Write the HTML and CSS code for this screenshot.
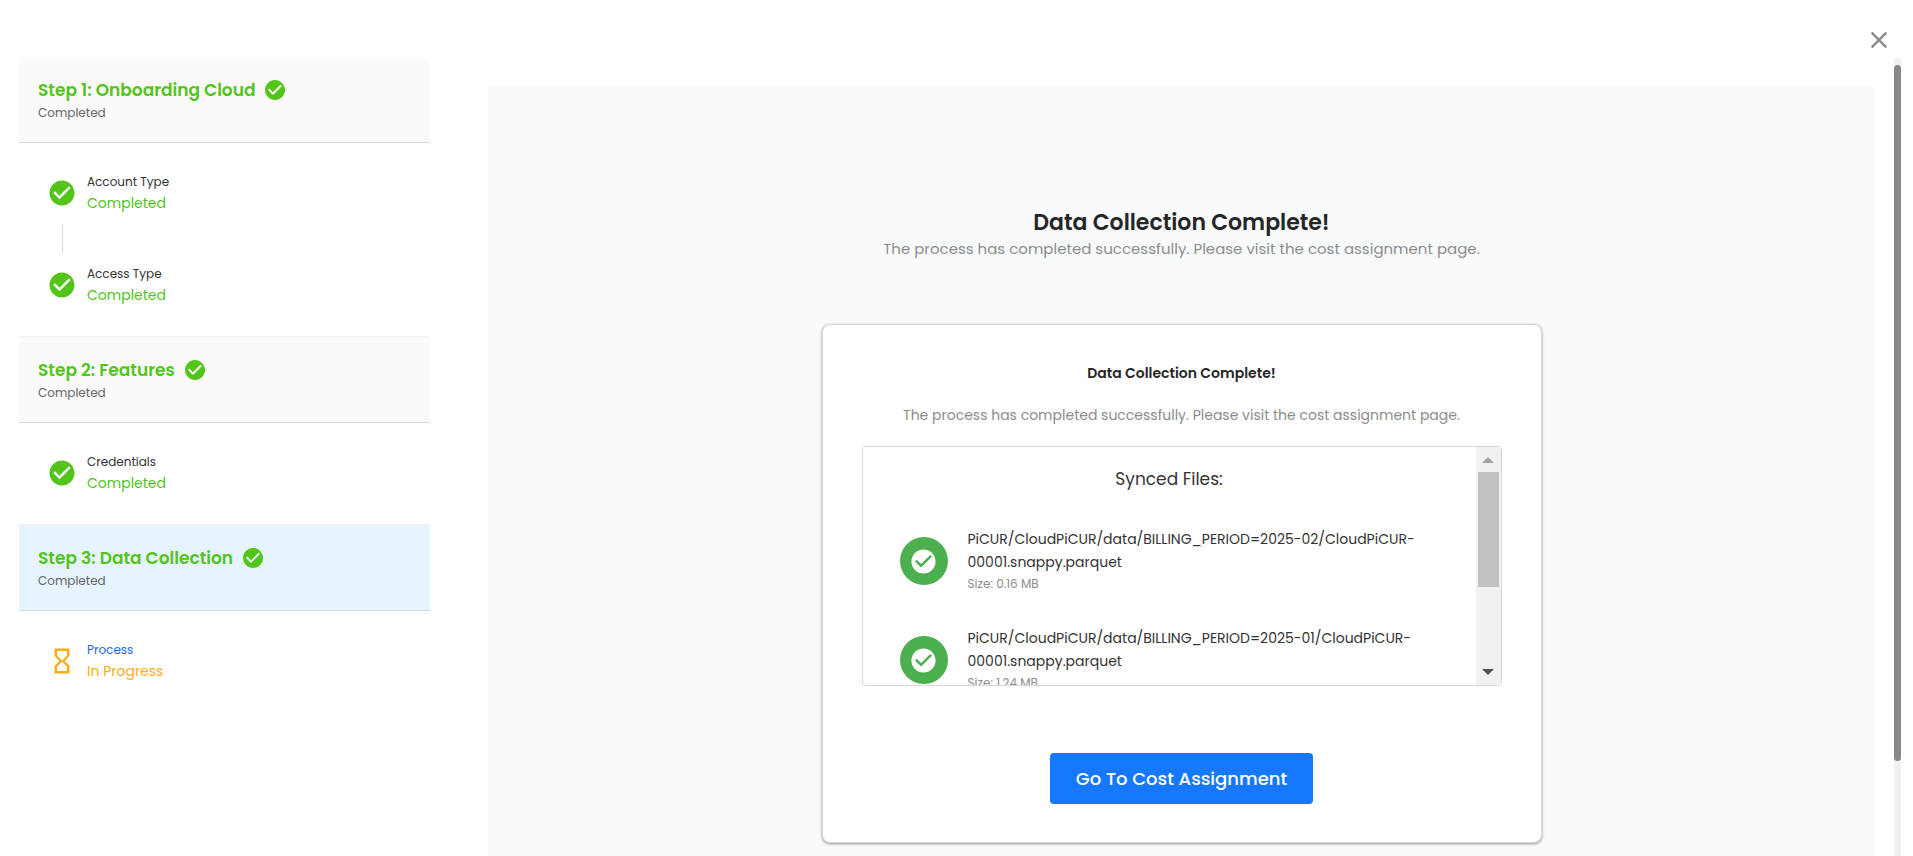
FILE: index.html
```html
<!DOCTYPE html>
<html lang="en">
<head>
<meta charset="utf-8">
<meta name="viewport" content="width=device-width, initial-scale=1">
<title>Data Collection</title>
<link rel="stylesheet" href="styles.css">
</head>
<body>
<svg class="defs" aria-hidden="true">
  <symbol id="check" viewBox="0 0 24 24"><path d="M12 2C6.48 2 2 6.48 2 12s4.48 10 10 10 10-4.48 10-10S17.52 2 12 2zm-2 15l-5-5 1.41-1.41L10 14.17l7.59-7.59L19 8l-9 9z"/></symbol>
  <symbol id="hourglass" viewBox="0 0 24 24"><path d="M6 2v6h.01L6 8.01 10 12l-4 4 .01.01H6V22h12v-5.99h-.01L18 16l-4-4 4-3.99-.01-.01H18V2H6zm10 14.5V20H8v-3.5l4-4 4 4zm-4-5l-4-4V4h8v3.5l-4 4z"/></symbol>
  <symbol id="close" viewBox="0 0 24 24"><path d="M19 6.41L17.59 5 12 10.59 6.41 5 5 6.41 10.59 12 5 17.59 6.41 19 12 13.41 17.59 19 19 17.59 13.41 12z"/></symbol>
</svg>
<div class="page">
  <header class="topbar">
    <button class="close" type="button" aria-label="Close"><svg class="close-icon"><use href="#close"/></svg></button>
  </header>
  <div class="body">
    <nav class="steps" aria-label="Onboarding steps">
      <section class="step">
        <div class="step-head">
          <h2 class="step-title">Step 1: Onboarding Cloud <svg class="step-icon"><use href="#check"/></svg></h2>
          <p class="step-status">Completed</p>
        </div>
        <ul class="substeps">
          <li class="substep">
            <svg class="substep-icon"><use href="#check"/></svg>
            <div><p class="substep-name">Account Type</p><p class="substep-status">Completed</p></div>
          </li>
          <li class="connector" aria-hidden="true"></li>
          <li class="substep">
            <svg class="substep-icon"><use href="#check"/></svg>
            <div><p class="substep-name">Access Type</p><p class="substep-status">Completed</p></div>
          </li>
        </ul>
      </section>
      <section class="step">
        <div class="step-head">
          <h2 class="step-title">Step 2: Features <svg class="step-icon"><use href="#check"/></svg></h2>
          <p class="step-status">Completed</p>
        </div>
        <ul class="substeps">
          <li class="substep">
            <svg class="substep-icon"><use href="#check"/></svg>
            <div><p class="substep-name">Credentials</p><p class="substep-status">Completed</p></div>
          </li>
        </ul>
      </section>
      <section class="step step-active">
        <div class="step-head">
          <h2 class="step-title">Step 3: Data Collection <svg class="step-icon"><use href="#check"/></svg></h2>
          <p class="step-status">Completed</p>
        </div>
        <ul class="substeps">
          <li class="substep substep-current">
            <svg class="substep-icon"><use href="#hourglass"/></svg>
            <div><p class="substep-name">Process</p><p class="substep-status">In Progress</p></div>
          </li>
        </ul>
      </section>
    </nav>
    <main class="content">
      <h1 class="title">Data Collection Complete!</h1>
      <p class="subtitle">The process has completed successfully. Please visit the cost assignment page.</p>
      <section class="card">
        <h2 class="card-title">Data Collection Complete!</h2>
        <p class="card-text">The process has completed successfully. Please visit the cost assignment page.</p>
        <div class="files">
          <div class="files-view">
            <h3 class="files-title">Synced Files:</h3>
            <ul class="file-list">
              <li class="file">
                <span class="badge"><svg class="badge-icon"><use href="#check"/></svg></span>
                <div class="file-info"><p class="file-name">PiCUR/CloudPiCUR/data/BILLING_PERIOD=2025-02/CloudPiCUR-00001.snappy.parquet</p><p class="file-size">Size: 0.16 MB</p></div>
              </li>
              <li class="file">
                <span class="badge"><svg class="badge-icon"><use href="#check"/></svg></span>
                <div class="file-info"><p class="file-name">PiCUR/CloudPiCUR/data/BILLING_PERIOD=2025-01/CloudPiCUR-00001.snappy.parquet</p><p class="file-size">Size: 1.24 MB</p></div>
              </li>
            </ul>
          </div>
          <div class="files-bar" aria-hidden="true">
            <span class="arrow arrow-up"></span>
            <span class="files-track"><span class="files-thumb"></span></span>
            <span class="arrow arrow-down"></span>
          </div>
        </div>
        <button class="action" type="button">Go To Cost Assignment</button>
      </section>
    </main>
    <div class="page-bar" aria-hidden="true"><span class="page-thumb"></span></div>
  </div>
</div>
</body>
</html>
```
FILE: styles.css
```css
* { box-sizing: border-box; }
body, h1, h2, h3, p, ul { margin: 0; padding: 0; }
ul { list-style: none; }
body {
  font-family: Poppins, Inter, "Open Sans", sans-serif;
  font-size: 14px;
  color: #262626;
  background: #fff;
}
svg { display: block; flex: none; fill: currentColor; }
button { font: inherit; border: 0; cursor: pointer; }
.defs { display: none; }

.page { display: flex; flex-direction: column; height: 100vh; overflow: hidden; }
.topbar { display: flex; flex: none; justify-content: flex-end; height: 58px; padding: 26px 20px 0 0; }
.close { width: 28px; height: 28px; padding: 0; background: none; color: #888; }
.close-icon { width: 28px; height: 28px; }
.body { display: flex; flex: 1; min-height: 0; padding: 0 12px 0 19px; }

.steps { flex: 0 0 411px; }
.step-head {
  padding: 20px 19px 18px;
  background: #fafafa;
  border-bottom: 1px solid #d9d9d9;
}
.step:first-child .step-head { border-radius: 4px 4px 0 0; }
.step + .step .step-head { padding-top: 21px; border-top: 1px solid #f0f0f0; }
.step-active .step-head { background: #e6f4ff; }
.step-title {
  display: flex;
  align-items: center;
  gap: 8px;
  font-size: 17px;
  line-height: 24px;
  font-weight: 600;
  color: #52c41a;
}
.step-icon { width: 24px; height: 24px; }
.step-status { font-size: 12px; line-height: 22px; color: #666; }
.substeps { padding: 28px 28px 30px; }
.substep { display: flex; align-items: center; gap: 10px; color: #52c41a; }
.substep-icon { width: 30px; height: 30px; }
.substep-name { font-size: 12px; line-height: 22px; color: #333; }
.substep-status { font-size: 14px; line-height: 21px; }
.connector { width: 1px; height: 28px; margin: 11px 0 10px 15px; background: #d9d9d9; }
.substep-current { color: #faad14; }
.substep-current .substep-name { color: #1d66e0; }

.content {
  display: flex;
  flex: 1;
  flex-direction: column;
  align-items: center;
  min-width: 0;
  margin: 29px 19px 0 58px;
  padding-top: 121px;
  background: #f9fafc;
}
.title { font-size: 22px; line-height: 30px; font-weight: 600; }
.subtitle { font-size: 15px; line-height: 22px; color: #8c8c8c; }
.card {
  display: flex;
  flex-direction: column;
  align-items: center;
  width: 100%;
  max-width: 720px;
  margin-top: 64px;
  padding: 36px 39px 38px;
  border: 1px solid #d9d9d9;
  border-radius: 8px;
  background: #fff;
  box-shadow: 0 1px 3px rgba(0, 0, 0, 0.4);
}
.card-title { font-size: 14px; line-height: 24px; font-weight: 600; }
.card-text { margin-top: 18px; font-size: 14px; line-height: 24px; color: #8c8c8c; }

.files {
  display: flex;
  width: 100%;
  height: 240px;
  margin-top: 19px;
  border: 1px solid #d9d9d9;
  border-radius: 4px;
  overflow: hidden;
}
.files-view { flex: 1; min-width: 0; padding: 20px 37px 0; overflow: hidden; }
.files-title { font-size: 17px; line-height: 24px; font-weight: 400; text-align: center; color: #333; }
.file-list { padding-top: 37px; }
.file { display: flex; align-items: center; gap: 20px; margin-bottom: 33px; }
.badge {
  display: flex;
  flex: none;
  align-items: center;
  justify-content: center;
  width: 48px;
  height: 48px;
  border-radius: 50%;
  background: #4caf50;
  color: #fff;
}
.badge-icon { width: 29px; height: 29px; }
.file-info { min-width: 0; }
.file-name { font-size: 14px; line-height: 23px; color: #333; }
.file-size { font-size: 12px; line-height: 20px; color: #8c8c8c; }

.files-bar { display: flex; flex: none; flex-direction: column; align-items: center; width: 25px; background: #f1f1f1; }
.arrow { flex: none; width: 0; border: 6px solid transparent; }
.arrow-up { margin: 4px 0 9px; border-bottom-color: #a3a3a3; }
.arrow-down { margin: 9px 0 4px; border-top-color: #505050; }
.files-track { flex: 1; width: 21px; }
.files-thumb { display: block; height: 61%; background: #c1c1c1; }

.action {
  margin-top: 67px;
  padding: 13px 26px;
  border-radius: 4px;
  background: #1677ff;
  color: #fff;
  font-size: 18px;
  line-height: 25px;
  font-weight: 500;
}

.page-bar { flex: none; width: 7px; padding-top: 7px; background: #f1f1f1; }
.page-thumb { display: block; height: 88%; border-radius: 4px; background: #888; }
```
